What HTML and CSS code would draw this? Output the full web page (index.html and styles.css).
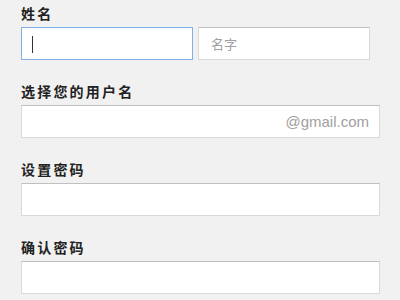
FILE: index.html
```html
<!DOCTYPE html>
<html lang="zh-CN">
<head>
  <meta charset="UTF-8">
  <title>创建您的 Google 帐户</title>
  <link rel="stylesheet" href="styles.css">
</head>
<body>

  <form class="signup">
    <!-- 姓名 -->
    <div class="form-group">
      <label>姓名</label>
      <div class="name-row">
        <div class="field half focused">
          <input type="text" name="lastname">
          <span class="caret"></span>
        </div>
        <div class="field half">
          <input type="text" name="firstname" placeholder="名字">
        </div>
      </div>
    </div>

    <!-- 用户名 -->
    <div class="form-group">
      <label>选择您的用户名</label>
      <div class="field">
        <input type="text" name="username">
        <span class="suffix">@gmail.com</span>
      </div>
    </div>

    <div class="form-group">
      <label>设置密码</label>
      <div class="field"><input type="password" name="password"></div>
    </div>

    <div class="form-group">
      <label>确认密码</label>
      <div class="field"><input type="password" name="password2"></div>
    </div>
  </form>

</body>
</html>
```

FILE: styles.css
```css
body { margin: 0; background: #f1f1f1; font-family: "Liberation Sans", Arial, "Noto Sans CJK SC", sans-serif; }
.signup { padding: 5px 0 0 21px; width: 359px; }
.form-group { margin-bottom: 23px; }
.form-group:last-child { margin-bottom: 0; }
label { display: block; height: 16px; line-height: 16px; margin-bottom: 6px; font-size: 14px; font-weight: bold; letter-spacing: 2.2px; color: #222; font-family: "Noto Sans CJK SC", sans-serif; }
.name-row { display: flex; gap: 5px; }
.field { position: relative; display: flex; align-items: center; height: 31px; background: #fff; border: 1px solid #d9d9d9; border-top-color: #c0c0c0; }
.field.half { width: 170px; }
.field.focused { border-color: #86aee6; }
input { flex: 1; min-width: 0; height: 100%; border: none; outline: none; background: transparent; padding: 0 12px; font-size: 14px; font-family: inherit; }
input::placeholder { color: #a0a0a0; font-family: "Noto Sans CJK SC", sans-serif; font-size: 13px; }
.suffix { padding-right: 10px; font-size: 15px; color: #a0a0a0; }
.caret { position: absolute; left: 10px; top: 8px; width: 1px; height: 17px; background: #333; }
```
